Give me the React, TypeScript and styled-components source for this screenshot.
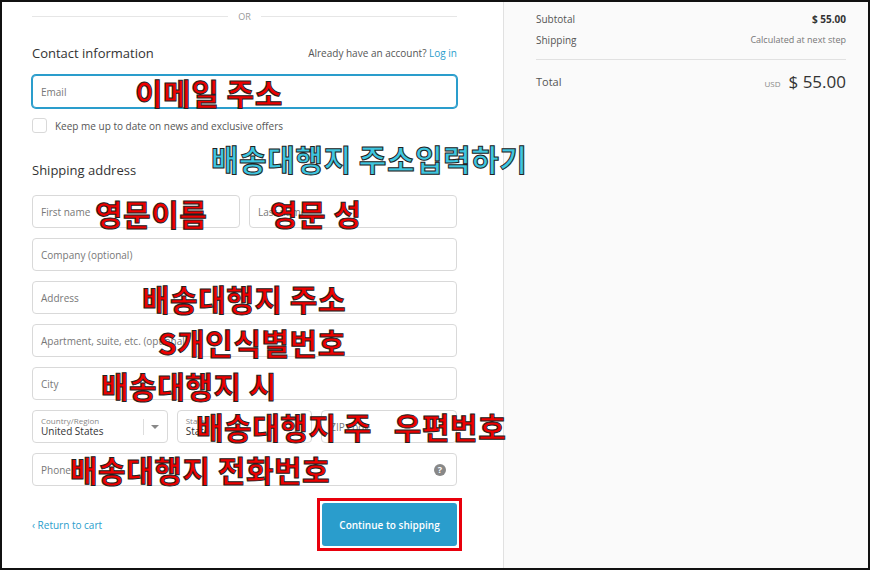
import React from "react";
import styled, { createGlobalStyle } from "styled-components";

const Global = createGlobalStyle`
  html,body{margin:0;padding:0;background:#fff;}
  body{font-family:"Open Sans","Noto Sans",sans-serif;}
  *{box-sizing:border-box;}
`;

const Frame = styled.div`
  position: relative; width: 870px; height: 570px; border: 2px solid #111;
  display: grid; grid-template-columns: 501px 1fr; overflow: hidden;
`;
const Main = styled.div`
  padding: 0 46px 0 30px; display: flex; flex-direction: column;
`;
const Side = styled.div`
  background: #fafafa; border-left: 1px solid #e1e1e1; padding: 6px 22px 0 32px;
`;
const OrRow = styled.div`
  display: flex; align-items: center; gap: 10px; height: 28px;
  color: #999; font-size: 9px;
  &::before,&::after{content:"";flex:1;height:1px;background:#e6e6e6;}
`;
const HeadRow = styled.div`
  display:flex; justify-content:space-between; align-items:center; margin-top: 8px; height: 30px;
`;
const Title = styled.div`font-size:13px;color:#333;`;
const Small = styled.div`font-size:10px;color:#555; a{color:#2a9dcc;text-decoration:none;}`;
const Field = styled.div<{ $focus?: boolean }>`
  height: 33px; border: 1px solid ${p => p.$focus ? "#2a9dcc" : "#d9d9d9"};
  box-shadow: ${p => p.$focus ? "0 0 0 1px #2a9dcc" : "none"};
  border-radius: 4px; display:flex; align-items:center; padding: 0 8px;
  font-size: 10px; color: #777; background:#fff; position: relative;
`;
const Grid = styled.div<{ $cols: string; $mt?: number }>`
  display:grid; grid-template-columns: ${p => p.$cols}; gap: 9px; margin-top: ${p => p.$mt ?? 10}px;
`;
const Check = styled.div`
  display:flex; align-items:center; gap:8px; margin-top:10px; font-size:10px; color:#555;
  &::before{content:"";width:13px;height:13px;border:1px solid #d9d9d9;border-radius:3px;}
`;
const Stack = styled.div`display:flex;flex-direction:column;line-height:1.2;`;
const Tiny = styled.span`font-size:8px;color:#888;`;
const Val = styled.span`font-size:10px;color:#333;`;
const Caret = styled.div`
  position:absolute; right:8px; top:8px; height:16px; padding-left:7px; border-left:1px solid #ddd;
  display:flex; align-items:center;
  &::after{content:"";border:4px solid transparent;border-top-color:#888;margin-top:4px;}
`;
const Help = styled.div`
  position:absolute; right:10px; width:12px;height:12px;border-radius:50%;background:#888;color:#fff;
  font-size:9px;font-weight:700;display:flex;align-items:center;justify-content:center;
`;
const Footer = styled.div`display:flex;justify-content:space-between;align-items:center;margin-top:12px;`;
const Back = styled.a`font-size:10px;color:#2a9dcc;`;
const BtnWrap = styled.div`border:3px solid #e8000c;padding:2px;margin-right:-5px;`;
const Btn = styled.button`
  width:135px;height:43px;background:#2a9dcc;border:none;border-radius:3px;color:#fff;
  font-family:inherit;font-size:10px;font-weight:600;
`;
const Line = styled.div<{ $big?: boolean }>`
  display:flex;justify-content:space-between;align-items:center;height:21px;font-size:${p => p.$big ? 11 : 10}px;color:#555;
`;
const Sep = styled.hr`border:none;border-top:1px solid #e1e1e1;margin:9px 0 11px;`;
const Total = styled.span`font-size:17px;color:#333;span{font-size:8px;color:#888;margin-right:8px;vertical-align:middle;}`;
const Note = styled.div<{ $x: number; $y: number; $c?: string }>`
  position:absolute; left:${p => p.$x}px; top:${p => p.$y}px;
  font-family:"Noto Sans CJK KR",sans-serif; font-weight:700; font-size:30px; line-height:1;
  color:${p => p.$c ?? "#ee0000"}; -webkit-text-stroke: 1px #222; white-space:pre; letter-spacing:0.5px;
`;

export default function App() {
  return (
    <>
      <Global />
      <Frame>
        <Main>
          <OrRow>OR</OrRow>
          <HeadRow><Title>Contact information</Title><Small>Already have an account? <a>Log in</a></Small></HeadRow>
          <Grid $cols="1fr" $mt={7}><Field $focus>Email</Field></Grid>
          <Check>Keep me up to date on news and exclusive offers</Check>
          <HeadRow style={{ marginTop: 22 }}><Title>Shipping address</Title></HeadRow>
          <Grid $cols="1fr 1fr" $mt={10}><Field>First name</Field><Field>Last name</Field></Grid>
          <Grid $cols="1fr"><Field>Company (optional)</Field></Grid>
          <Grid $cols="1fr"><Field>Address</Field></Grid>
          <Grid $cols="1fr"><Field>Apartment, suite, etc. (optional)</Field></Grid>
          <Grid $cols="1fr"><Field>City</Field></Grid>
          <Grid $cols="1fr 1fr 1fr">
            <Field><Stack><Tiny>Country/Region</Tiny><Val>United States</Val></Stack><Caret /></Field>
            <Field><Stack><Tiny>State</Tiny><Val>State</Val></Stack></Field>
            <Field>ZIP code</Field>
          </Grid>
          <Grid $cols="1fr"><Field>Phone<Help>?</Help></Field></Grid>
          <Footer><Back>‹ Return to cart</Back><BtnWrap><Btn>Continue to shipping</Btn></BtnWrap></Footer>
        </Main>
        <Side>
          <Line><span>Subtotal</span><b style={{ color: "#333", fontSize: 10 }}>$ 55.00</b></Line>
          <Line><span>Shipping</span><span style={{ fontSize: 9, color: "#777" }}>Calculated at next step</span></Line>
          <Sep />
          <Line $big><span>Total</span><Total><span>USD</span>$ 55.00</Total></Line>
        </Side>
        <Note $x={133} $y={75}>이메일 주소</Note>
        <Note $x={209} $y={141} $c="#3ec6e0">배송대행지 주소입력하기</Note>
        <Note $x={93} $y={196}>영문이름</Note>
        <Note $x={268} $y={196}>영문 성</Note>
        <Note $x={140} $y={281}>배송대행지 주소</Note>
        <Note $x={156} $y={325}>S개인식별번호</Note>
        <Note $x={99} $y={368}>배송대행지 시</Note>
        <Note $x={194} $y={409}>{"배송대행지 주   우편번호"}</Note>
        <Note $x={68} $y={452}>배송대행지 전화번호</Note>
      </Frame>
    </>
  );
}
